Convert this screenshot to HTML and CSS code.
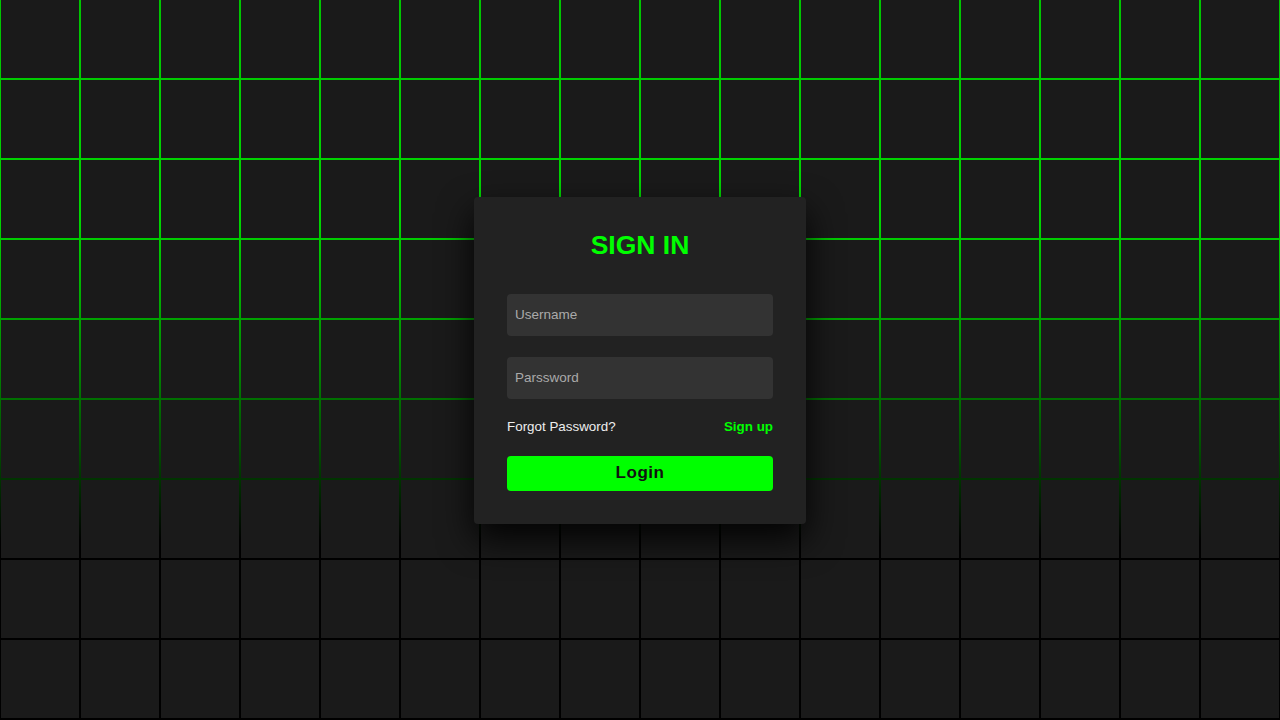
FILE: index.html
```html
<!DOCTYPE html>
<html lang="en">
<head>
<meta charset="utf-8">
<title>Sign In</title>
<link rel="stylesheet" href="styles.css">
</head>
<body>
<main class="stage">
  <section class="grid" id="grid"></section>
  <div class="signin">
    <h2 class="title">Sign In</h2>
    <form class="form">
      <input class="field" type="text" placeholder="Username">
      <input class="field" type="password" placeholder="Parssword">
      <div class="links">
        <a class="forgot" href="#">Forgot Password?</a>
        <a class="signup" href="#">Sign up</a>
      </div>
      <button class="login" type="button">Login</button>
    </form>
  </div>
</main>
<script>
  var g = document.getElementById('grid');
  for (var i = 0; i < 144; i++) {
    var s = document.createElement('span');
    s.className = 'cell';
    g.appendChild(s);
  }
</script>
</body>
</html>
```

FILE: styles.css
```css
* { box-sizing: border-box; margin: 0; padding: 0; }
html, body { width: 100%; height: 100%; overflow: hidden; }
body {
  background: #000;
  font-family: "Liberation Sans", Arial, sans-serif;
}
.stage {
  display: grid;
  width: 1280px;
  height: 720px;
  overflow: hidden;
}
.grid {
  grid-area: 1 / 1;
  display: grid;
  grid-template-columns: repeat(16, 78px);
  grid-auto-rows: 78px;
  gap: 2px;
  padding: 0 1px;
  background: linear-gradient(to bottom, #00c400 0%, #00d800 30%, #009400 48%, #005000 62%, #000 75%, #000 100%);
}
.cell {
  display: block;
  background: #1a1a1a;
}
.signin {
  grid-area: 1 / 1;
  place-self: center;
  width: 332px;
  padding: 33px;
  background: #222;
  border-radius: 4px;
  box-shadow: 0 15px 35px rgba(0, 0, 0, 0.9);
  display: flex;
  flex-direction: column;
  gap: 33px;
}
.title {
  font-size: 26.5px;
  line-height: 31px;
  color: #0f0;
  text-transform: uppercase;
  text-align: center;
  font-weight: bold;
}
.form {
  display: flex;
  flex-direction: column;
  gap: 21px;
}
.field {
  height: 42px;
  border: none;
  outline: none;
  border-radius: 4px;
  background: #333;
  color: #fff;
  padding: 0 8px;
  font-family: "Liberation Sans", Arial, sans-serif;
  font-size: 13.5px;
}
.field::placeholder { color: #aaa; }
.links {
  display: flex;
  justify-content: space-between;
  align-items: center;
  height: 16px;
  margin-top: -1px;
}
.forgot {
  color: #eee;
  font-size: 13.4px;
  text-decoration: none;
}
.signup {
  color: #0f0;
  font-size: 13.4px;
  font-weight: bold;
  text-decoration: none;
}
.login {
  height: 35px;
  border: none;
  border-radius: 4px;
  background: #0f0;
  color: #111;
  font-family: "Liberation Sans", Arial, sans-serif;
  font-size: 17px;
  font-weight: bold;
  letter-spacing: 0.5px;
  cursor: pointer;
}
```
